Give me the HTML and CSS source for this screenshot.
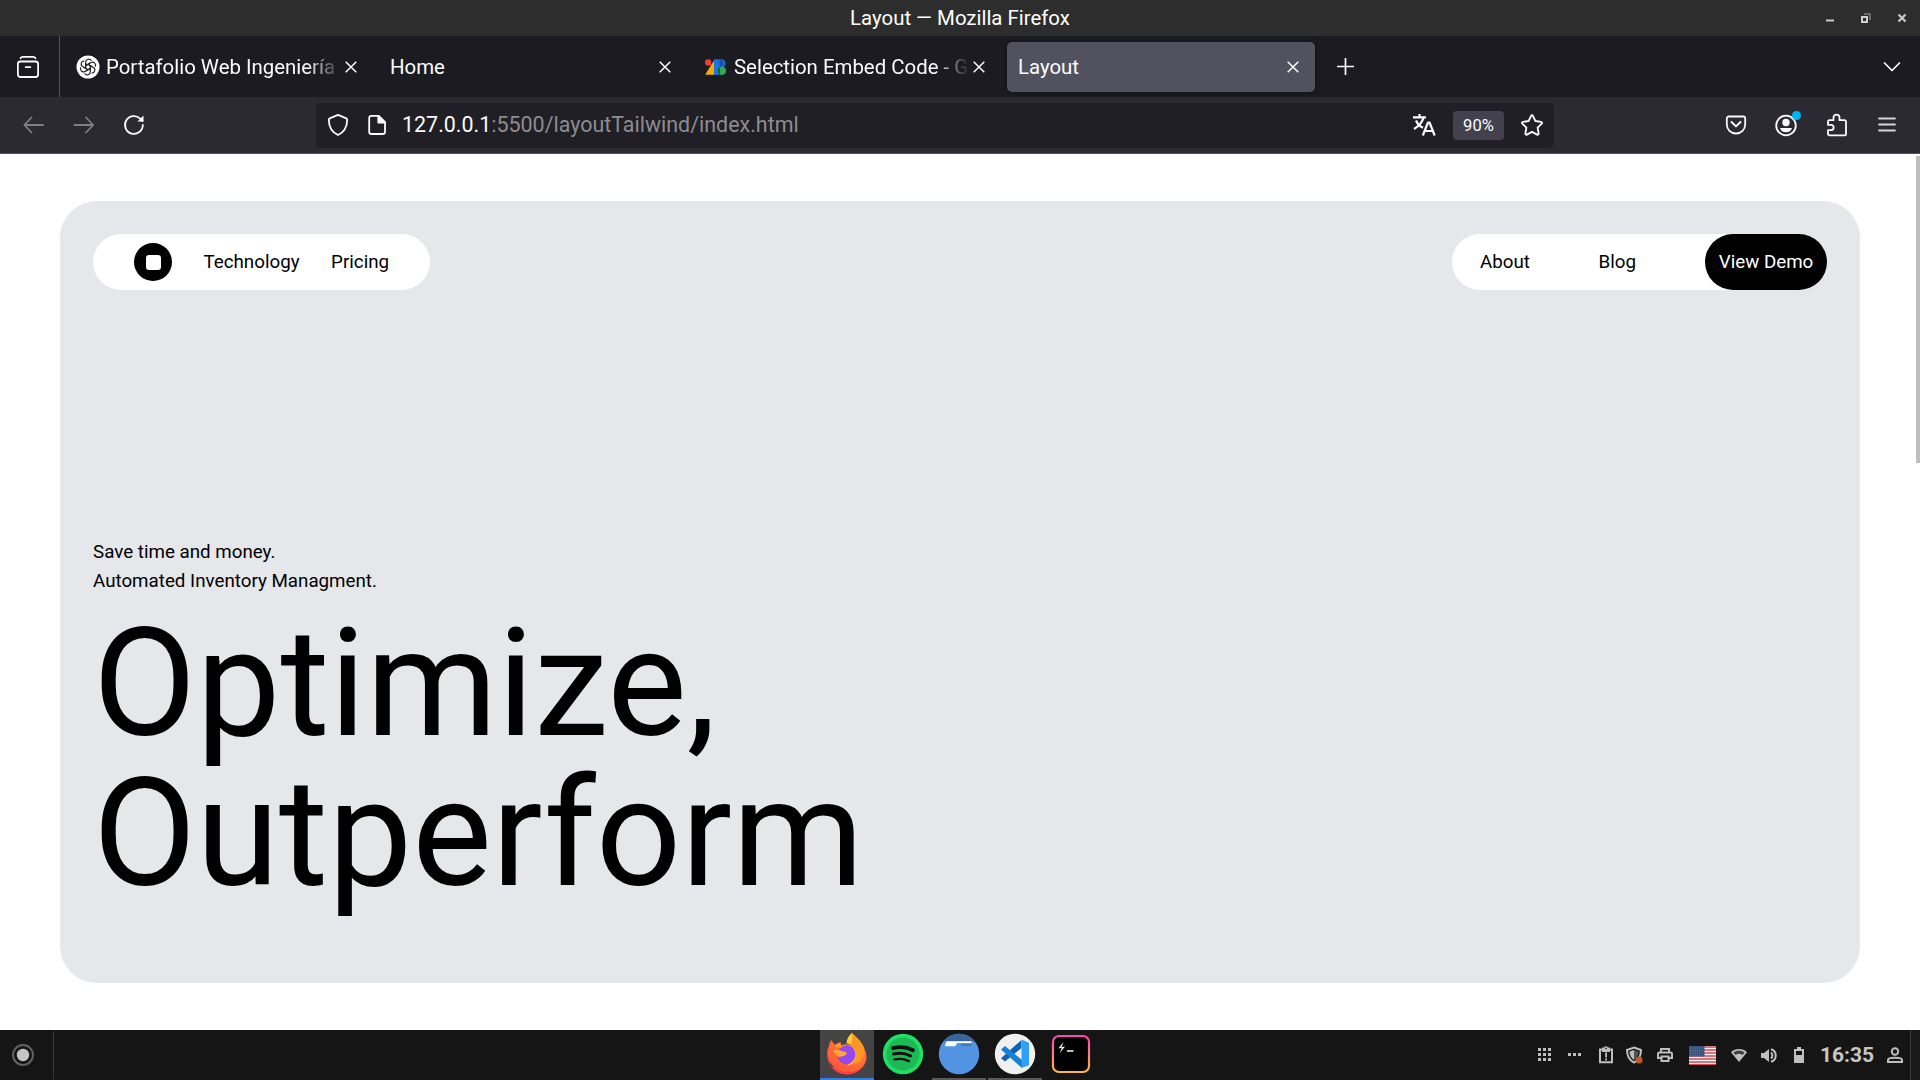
FILE: index.html
```html
<!DOCTYPE html>
<html lang="en">
<head>
<meta charset="utf-8">
<title>Layout</title>
<link rel="stylesheet" href="styles.css">
</head>
<body>
<header class="titlebar">
  <span class="window-title">Layout — Mozilla Firefox</span>
  <div class="window-controls">
    <svg width="10" height="12" viewBox="0 0 10 12"><path d="M1 7.5h8v2H1z" fill="#c9c9c9"/></svg>
    <svg width="10" height="12" viewBox="0 0 10 12"><path d="M3 1h7v7H8V3H3z" fill="#686868"/><path d="M1 5h5v5H1z" fill="none" stroke="#d0d0d0" stroke-width="2"/></svg>
    <svg width="10" height="12" viewBox="0 0 10 12"><path d="M1.5 2.5l7 7m0-7l-7 7" stroke="#c9c9c9" stroke-width="2.2"/></svg>
  </div>
</header>

<nav class="tabstrip">
  <div class="tab-manager">
    <svg width="24" height="24" viewBox="0 0 24 24" fill="none" stroke="#fbfbfe" stroke-width="1.8" stroke-linecap="round"><path d="M4.5 3.2C5 1.900 6 1.800 7 1.800h10c1 0 2 .1 2.500 1.400"/><rect x="1.900" y="6.500" width="20.200" height="15.500" rx="2.500"/><path d="M9.700 12.200h4.600"/></svg>
  </div>
  <div class="tabs">
    <div class="tab">
      <svg class="favicon" width="24" height="24" viewBox="0 0 24 24"><circle cx="12" cy="12" r="11.500" fill="#fff"/><g fill="none" stroke="#222" stroke-width="1.150"><path id="k" d="M9.700 10.600V7.200c0-3.300 4.300-4.100 5.700-1.500M9.700 10.600l2.300-1.300 4.400 2.500"/><use href="#k" transform="rotate(60 12 12)"/><use href="#k" transform="rotate(120 12 12)"/><use href="#k" transform="rotate(180 12 12)"/><use href="#k" transform="rotate(240 12 12)"/><use href="#k" transform="rotate(300 12 12)"/></g></svg>
      <span class="tab-label fade">Portafolio Web Ingeniería</span>
      <svg class="close" width="12" height="12" viewBox="0 0 12 12"><path d="M.7.7l10.600 10.600m0-10.600L.7 11.300"/></svg>
    </div>
    <div class="tab">
      <span class="tab-label">Home</span>
      <svg class="close" width="12" height="12" viewBox="0 0 12 12"><path d="M.7.7l10.600 10.600m0-10.600L.7 11.300"/></svg>
    </div>
    <div class="tab">
      <svg class="favicon" width="24" height="24" viewBox="0 0 24 24"><path d="M10.500 4.500v15.300H1.200z" fill="#f9ab00"/><path d="M10 4.300h6v15.500h-6z" fill="#1a73e8"/><circle cx="17.500" cy="8.200" r="4" fill="#1967d2"/><circle cx="17.800" cy="15.800" r="4.300" fill="#34a853"/><path d="M16 4.300a4 4 0 010 7.700z" fill="#174ea6"/><path d="M16 12v7.700a4.300 4.300 0 010-7.700z" fill="#0d652d"/><circle cx="4.200" cy="7.500" r="3.200" fill="#ea4335"/></svg>
      <span class="tab-label fade">Selection Embed Code - G</span>
      <svg class="close" width="12" height="12" viewBox="0 0 12 12"><path d="M.7.7l10.600 10.600m0-10.600L.7 11.300"/></svg>
    </div>
    <div class="tab active">
      <span class="tab-label">Layout</span>
      <svg class="close" width="12" height="12" viewBox="0 0 12 12"><path d="M.7.7l10.600 10.600m0-10.600L.7 11.300"/></svg>
    </div>
  </div>
  <svg class="new-tab" width="17" height="17" viewBox="0 0 17 17"><path d="M8.500 0v17M0 8.500h17" stroke="#fbfbfe" stroke-width="1.700"/></svg>
  <svg class="all-tabs" width="18" height="12" viewBox="0 0 18 12"><path d="M1.500 2L9 9.500 16.500 2" fill="none" stroke="#fbfbfe" stroke-width="1.700" stroke-linecap="round" stroke-linejoin="round"/></svg>
</nav>

<section class="toolbar">
  <div class="history">
    <svg class="dim" width="24" height="24" viewBox="0 0 24 24"><path d="M21 12H2.500m7-7.500L2.300 12l7.200 7.500"/></svg>
    <svg class="dim" width="24" height="24" viewBox="0 0 24 24"><path d="M2.500 12H21m-7-7.500l7.200 7.500-7.200 7.500"/></svg>
    <svg width="24" height="24" viewBox="0 0 24 24"><path d="M20.800 12a8.900 8.900 0 11-2.600-6.300l2.300 2.300"/><path d="M21.500 2.500v6h-6z" fill="#fbfbfe" stroke="none"/></svg>
  </div>
  <div class="urlbar">
    <div class="url-icons">
      <svg width="24" height="24" viewBox="0 0 24 24"><path d="M12 1.900l8.300 3.500c.6.300.9.700.9 1.300-.1 7.500-3.700 12.700-9.200 15.300-5.500-2.600-9.100-7.800-9.200-15.300 0-.6.300-1 .9-1.300z"/></svg>
      <svg width="24" height="24" viewBox="0 0 24 24"><path d="M6.500 2.900h7.200l6.300 6.300v9.500c0 1.500-.8 2.300-2.300 2.300H6.500c-1.500 0-2.300-.8-2.300-2.300V5.200c0-1.500.8-2.300 2.300-2.300z"/><path d="M13.300 3v6.600H20z" fill="#fbfbfe"/></svg>
    </div>
    <span class="url"><b>127.0.0.1</b>:5500/layoutTailwind/index.html</span>
    <svg class="translate" width="24" height="24" viewBox="0 0 24 24"><path d="M1 4.300h13M7.500 1v3M11.500 4.500C10.500 9 7 13 2 16M4 7.500c1.500 3.500 4 6 7 7.300"/><path d="M10.800 22.500l5.200-13h1.500l5.200 13M12.800 18h8"/></svg>
    <span class="zoom-badge">90%</span>
    <svg width="24" height="24" viewBox="0 0 24 24"><path d="M11.100 2.800c.4-.8 1.400-.8 1.800 0l2.500 5.200 5.700.9c.9.100 1.200 1.100.6 1.700l-4.100 4.100 1 5.800c.1.900-.7 1.500-1.500 1.100L12 18.900l-5.100 2.700c-.8.400-1.600-.2-1.500-1.100l1-5.800-4.100-4.100c-.6-.6-.3-1.600.6-1.700l5.700-.9z"/></svg>
  </div>
  <div class="tools">
    <svg width="24" height="24" viewBox="0 0 24 24"><path d="M4.800 3.500h14.400c1.200 0 2 .8 2 2v5.700c0 5.200-4 9.300-9.200 9.300s-9.200-4.100-9.200-9.300V5.500c0-1.200.8-2 2-2z"/><path d="M7.500 9l4.500 4.400L16.500 9" stroke-width="2"/></svg>
    <div class="account">
      <svg width="24" height="24" viewBox="0 0 24 24"><circle cx="12" cy="12.500" r="9.800"/><g fill="#fbfbfe" stroke="none"><circle cx="12" cy="9.500" r="3.700"/><path d="M6 15h12c-.7 2.800-3 4.200-6 4.200S6.700 17.800 6 15z"/></g></svg>
      <i class="badge-dot"></i>
    </div>
    <svg width="24" height="24" viewBox="0 0 24 24"><path d="M8.500 7.200V4.600a3 3 0 016 0v2.600h4.800c1.100 0 1.700.6 1.700 1.700v12.400c0 .7-.4 1-1 1H4.500c-.9 0-1.500-.6-1.500-1.500v-3.600h3a2.600 2.600 0 000-5.300H3V8.700c0-.9.600-1.500 1.500-1.500z"/></svg>
    <svg width="24" height="24" viewBox="0 0 24 24"><path d="M4 5.500h16M4 11.500h16M4 17.500h16" stroke="#d4d4d8"/></svg>
  </div>
</section>

<main class="viewport">
  <div class="page">
    <div class="hero">
      <div class="menus">
        <div class="menu menu-left">
          <span class="logo"><i></i></span>
          <span>Technology</span>
          <span>Pricing</span>
        </div>
        <div class="menu menu-right">
          <span class="about">About</span>
          <span class="blog">Blog</span>
          <span class="demo">View Demo</span>
        </div>
      </div>
      <div class="pitch">
        <p>Save time and money.</p>
        <p>Automated Inventory Managment.</p>
        <h1>Optimize,<br>Outperform</h1>
      </div>
    </div>
  </div>
  <div class="scrollbar"></div>
</main>

<footer class="taskbar">
  <div class="launcher">
    <svg width="24" height="24" viewBox="0 0 24 24"><circle cx="12" cy="12" r="10" fill="none" stroke="#606060" stroke-width="2"/><circle cx="12" cy="12" r="6.200" fill="#c4c4c4"/></svg>
  </div>
  <div class="apps">
    <div class="app focused">
      <svg width="42" height="42" viewBox="0 0 42 42">
        <defs><linearGradient id="fx" x1="1" y1="0" x2=".4" y2="1"><stop offset="0" stop-color="#ff9a1f"/><stop offset=".5" stop-color="#ff7139"/><stop offset="1" stop-color="#ff5a36"/></linearGradient></defs>
        <path d="M1 20c0-3 1-6 3-8v22h34l3-13c0 12-9 20.500-20 20.500S1 33 1 20z" fill="#ff3b47"/>
        <path d="M5 7l4 5c2-2 4-2.500 5.500-2.500L15 12c3-1 6-1 9 0l2-9.500c6 3 8 7 8.500 10.500l1-3c4 6 5.500 12 4.500 17-1.500 7-8 12-17.500 12C11 39 2.500 32 2 21c-.2-5 1-10 3-14z" fill="url(#fx)"/>
        <path d="M26 0c5 4 10 9 11.500 14.500 2 8-2 15-9 17l2-16c-3-3-8-4-9-5 0-4 2-8 4.500-10.500z" fill="#ff9820"/><path d="M26 0c1 4 0 8-1 11l-4.500-.5C20.500 6 23 2.500 26 0z" fill="#ffcf32"/>
        <circle cx="21" cy="22" r="9.500" fill="#9748ed"/><path d="M7 17c5-1 8 1 14 2.500-1 4-5 3.500-7.500 4.500-3-1-5-4-6.500-7z" fill="#ffa436"/><path d="M9 12l5.500-2.500.8 5.500-6-1z" fill="#ff9a2c"/><path d="M24 12c6 2 8.500 8 5.500 15-2 4-5 5.500-9 5.500 6-3 9-7 9-11 0-4-2-7-5.500-9.500z" fill="#ffb62d"/>
      </svg>
    </div>
    <div class="app">
      <svg width="42" height="42" viewBox="0 0 42 42"><circle cx="21" cy="21" r="20.200" fill="#1fdf64"/><circle cx="21" cy="21" r="16.500" fill="#1db954"/><g fill="none" stroke="#111" stroke-linecap="round"><path d="M11 15.200c7-1.800 14-1.200 20 2" stroke-width="3.800"/><path d="M11.500 21c6-1.300 12-.7 17 1.800" stroke-width="3"/><path d="M12.500 26.400c5-1 10-.5 14.500 1.700" stroke-width="2.400"/></g></svg>
    </div>
    <div class="app open">
      <svg width="42" height="42" viewBox="0 0 42 42"><circle cx="21" cy="21" r="20.200" fill="#5294e2"/><path d="M5.200 8.300a20.200 20.200 0 0131.600 0z" fill="#396499"/><path d="M8.500 8.300h25v1.600H19.500l-2.500 3.300H6.800z" fill="#fff"/><path d="M23.500 11.500h10v1h-10z" fill="#315f98"/></svg>
    </div>
    <div class="app open">
      <svg width="42" height="42" viewBox="0 0 42 42"><circle cx="21" cy="21" r="20.200" fill="#f0f0f1"/><path d="M27.500 7v8L11 28.500l-4-3.300z" fill="#0f62b5"/><path d="M7 16.500l4-3.400L28 27v8z" fill="#1880d4"/><path d="M27.500 6.500l7.500 3.300v22.400L27.500 35z" fill="#30a0f4"/></svg>
    </div>
    <div class="app">
      <svg width="42" height="42" viewBox="0 0 42 42"><defs><linearGradient id="tm" x2="0" y2="1"><stop offset="0" stop-color="#fe45b2"/><stop offset="1" stop-color="#ffb545"/></linearGradient></defs><rect x="3" y="3" width="36" height="36" rx="6" fill="#000" stroke="url(#tm)" stroke-width="2.200"/><path d="M13.500 9l-5.200 6.500 3.500-.8-2 5.300 5.200-6.500-3.500.8z" fill="#fff"/><path d="M17 18h6.500" stroke="#fff" stroke-width="1.500"/></svg>
    </div>
  </div>
  <div class="tray">
    <div class="slot w29"><svg width="14" height="14" viewBox="0 0 14 14"><path d="M0 0h3v3H0zM5 0h3v3H5zM10 0h3v3h-3zM0 5h3v3H0zM5 5h3v3H5zM10 5h3v3h-3zM0 10h3v3H0zM5 10h3v3H5zM10 10h3v3h-3z"/></svg></div>
    <div class="slot w31"><svg width="14" height="4" viewBox="0 0 14 4"><path d="M0 0h3v3H0zM5 0h3v3H5zM10 0h3v3h-3z"/></svg></div>
    <div class="slot w32"><svg width="16" height="18" viewBox="0 0 16 18"><path d="M2 3.500h12v12.700H2z" class="line"/><path d="M4 1.500h8V6H4z"/><circle cx="8" cy="2.300" r="2"/><circle cx="8" cy="2.500" r=".8" fill="#151515"/><path d="M7.200 6.500h1.800v5H7.200zM7.200 12.500h1.800v2H7.200z"/></svg></div>
    <div class="slot w24"><svg width="18" height="18" viewBox="0 0 18 18"><path d="M9 1.500L16 4c0 6-2 10-7 12.500C4 14 2 10 2 4z" class="line"/><path d="M9 4v10C6 12 4.500 9 4.500 5.500z"/><path d="M9 4v10c3-2 4.500-5 4.500-8.500z" fill="#555"/><circle cx="14" cy="14" r="3.500" fill="#bf5a2d"/></svg></div>
    <div class="slot w38"><svg width="16" height="16" viewBox="0 0 16 16"><path d="M4 5V2h8v3M4 11H1V7c0-1 .5-1.500 1.500-1.500h11c1 0 1.500.5 1.500 1.500v4h-3M4.500 9.500h7V14h-7z" class="line"/></svg></div>
    <div class="slot w36"><svg width="27" height="19" viewBox="0 0 27 19"><path d="M0 0h27v19H0z" fill="#f4f4f4"/><path d="M0 1h27M0 4h27M0 7h27M0 10h27M0 13h27M0 16h27M0 18.600h27" stroke="#d24a52" stroke-width="1.400"/><path d="M0 0h15.500v10.500H0z" fill="#36527f"/><path d="M1 2h14M1 4.500h14M1 7h14M1 9.300h14" stroke="#8898b4" stroke-width=".7" stroke-dasharray="1 1.300"/></svg></div>
    <div class="slot w38"><svg width="16" height="13" viewBox="0 0 16 13"><path d="M8 0c3 0 6 1.200 8 3.200L8 13 0 3.200C2 1.200 5 0 8 0z"/><path d="M8 1.800c2.200 0 4 .6 5.500 1.700l-2 2.400a6 6 0 00-7 0l-2-2.400C4 2.400 5.800 1.800 8 1.800z" fill="#3b3b3b"/></svg></div>
    <div class="slot w22"><svg width="16" height="15" viewBox="0 0 16 15"><path d="M0 5h3l5-4v13l-5-4H0z"/><path d="M10 4.500a4 4 0 010 6M10 1.300a6.500 6.500 0 010 12.500" class="line"/></svg></div>
    <div class="slot w38"><svg width="10" height="16" viewBox="0 0 10 16"><path d="M3 0h4v2h3v14H0V2h3z"/><path d="M2 4h6v4H2z" fill="#151515"/></svg></div>
    <time class="clock">16:35</time>
    <div class="slot w26"><svg width="16" height="16" viewBox="0 0 16 16"><circle cx="8" cy="4.500" r="3.200" class="line"/><path d="M1 15v-2c0-3 14-3 14 0v2z" class="line"/></svg></div>
  </div>
  <div class="show-desktop"></div>
</footer>
</body>
</html>
```
FILE: styles.css
```css
* { box-sizing: border-box; }
body {
  margin: 0;
  width: 1920px;
  height: 1080px;
  overflow: hidden;
  display: flex;
  flex-direction: column;
  font-family: Roboto, "Liberation Sans", sans-serif;
  font-size: 20.4px;
  color: #fbfbfe;
  background: #fff;
}
svg { display: block; flex: none; }

.titlebar {
  flex: 0 0 36px;
  display: grid;
  grid-template-columns: 1fr auto 1fr;
  align-items: center;
  background: #2d2d2d;
  color: #fff;
}
.window-title { grid-column: 2; }
.window-controls {
  display: flex;
  justify-content: flex-end;
  gap: 26px;
  padding-right: 13px;
}

.tabstrip {
  flex: 0 0 61px;
  display: flex;
  align-items: center;
  background: #1c1b22;
}
.tab-manager {
  width: 60px;
  height: 61px;
  display: flex;
  align-items: center;
  padding-left: 16px;
  border-right: 1px solid #55545c;
}
.tabs { display: flex; gap: 6px; padding-left: 5px; }
.tab {
  width: 308px;
  height: 50px;
  display: flex;
  align-items: center;
  padding: 0 16px 0 11px;
  border-radius: 5px;
}
.tab.active {
  background: #52525e;
  box-shadow: 0 0 4px rgba(0, 0, 0, .45);
}
.favicon { margin-right: 6px; }
.tab-label { flex: 1; min-width: 0; white-space: nowrap; }
.tab-label.fade {
  margin-right: 3px;
  mask-image: linear-gradient(to left, transparent, #000 36px);
}
.close path { stroke: #fbfbfe; stroke-width: 1.5; }
.new-tab { margin-left: 22px; }
.all-tabs { margin-left: auto; margin-right: 19px; }

.toolbar {
  flex: 0 0 57px;
  display: flex;
  align-items: center;
  background: #2b2a33;
  border-bottom: 1px solid #53525a;
}
.toolbar svg {
  fill: none;
  stroke: #fbfbfe;
  stroke-width: 1.8;
  stroke-linecap: round;
  stroke-linejoin: round;
}
.toolbar svg.dim { stroke: #807f85; }
.history { display: flex; gap: 26px; width: 316px; padding-left: 22px; }
.urlbar {
  width: 1238px;
  height: 45px;
  display: flex;
  align-items: center;
  padding: 0 10px;
  background: #201f25;
  border-radius: 5px;
}
.url-icons { display: flex; gap: 15px; margin-right: 13px; }
.url { flex: 1; padding-bottom: 1px; font-size: 21.45px; color: #8d8c91; }
.url b { font-weight: 400; color: #fbfbfe; }
.toolbar svg.translate { stroke-width: 2.2; stroke-linecap: butt; margin-right: 17px; }
.zoom-badge {
  width: 51px;
  height: 29px;
  margin-right: 16px;
  border-radius: 4px;
  background: #42414d;
  font-size: 16.6px;
  line-height: 29px;
  text-align: center;
}
.tools { display: flex; gap: 26.4px; margin-left: 170px; }
.account { position: relative; }
.badge-dot {
  position: absolute;
  right: -3px;
  top: -2px;
  width: 9px;
  height: 9px;
  border-radius: 50%;
  background: #00b3f4;
}

.viewport { flex: 0 0 876px; display: flex; color: #000; background: #fff; }
.page { width: 1916px; padding: 47px 56px 47px 60px; font-size: 18.75px; }
.scrollbar { width: 4px; height: 307px; margin-top: 2px; background: #bfbfbf; }
.hero {
  height: 782px;
  display: flex;
  flex-direction: column;
  justify-content: space-between;
  padding: 33px 33px 74px;
  border-radius: 37px;
  background: #e5e7eb;
}
.menus { display: flex; justify-content: space-between; }
.menu {
  height: 56px;
  display: flex;
  align-items: center;
  border-radius: 28px;
  background: #fff;
}
.menu-left { width: 337px; gap: 31.5px; padding-left: 41px; }
.logo {
  width: 38px;
  height: 38px;
  display: grid;
  place-items: center;
  border-radius: 50%;
  background: #000;
}
.logo i { width: 15px; height: 15px; border-radius: 3px; background: #fff; }
.menu-right { width: 375px; padding-left: 28px; }
.about { width: 118.5px; }
.blog { flex: 1; }
.demo {
  width: 122px;
  height: 56px;
  border-radius: 28px;
  background: #000;
  color: #fff;
  line-height: 56px;
  text-align: center;
}
.pitch p { margin: 0; line-height: 29px; }
.pitch h1 { margin: 13px 0 0; font-size: 150px; font-weight: 400; line-height: 150px; }

.taskbar {
  flex: 0 0 50px;
  display: grid;
  grid-template-columns: 820px 280px 430px 380px 10px;
  background: #151515;
}
.launcher {
  width: 54px;
  height: 48px;
  margin-top: 1px;
  display: flex;
  align-items: center;
  padding-left: 11px;
  border-right: 1px solid #383838;
}
.apps { display: flex; gap: 2px; }
.app { width: 54px; height: 50px; padding: 3px 6px; border-bottom: 2px solid transparent; }
.app.focused { background: #444; border-color: #2f80ed; }
.app.open { border-color: #5a5a5a; }
.tray { grid-column: 4; display: flex; align-items: center; }
.tray svg { fill: #bebebe; }
.tray .line { fill: none; stroke: #bebebe; stroke-width: 2; }
.slot { display: flex; justify-content: center; }
.w22 { width: 22px; }
.w24 { width: 24px; }
.w26 { width: 26px; }
.w29 { width: 29px; }
.w31 { width: 31px; }
.w32 { width: 32px; }
.w36 { width: 36px; }
.w38 { width: 38px; }
.clock { width: 64px; padding-left: 2px; font-size: 21px; font-weight: 700; color: #c6c6c6; }
.show-desktop { border-left: 1px solid #3a3a3a; background: #1a1a1a; }
```
